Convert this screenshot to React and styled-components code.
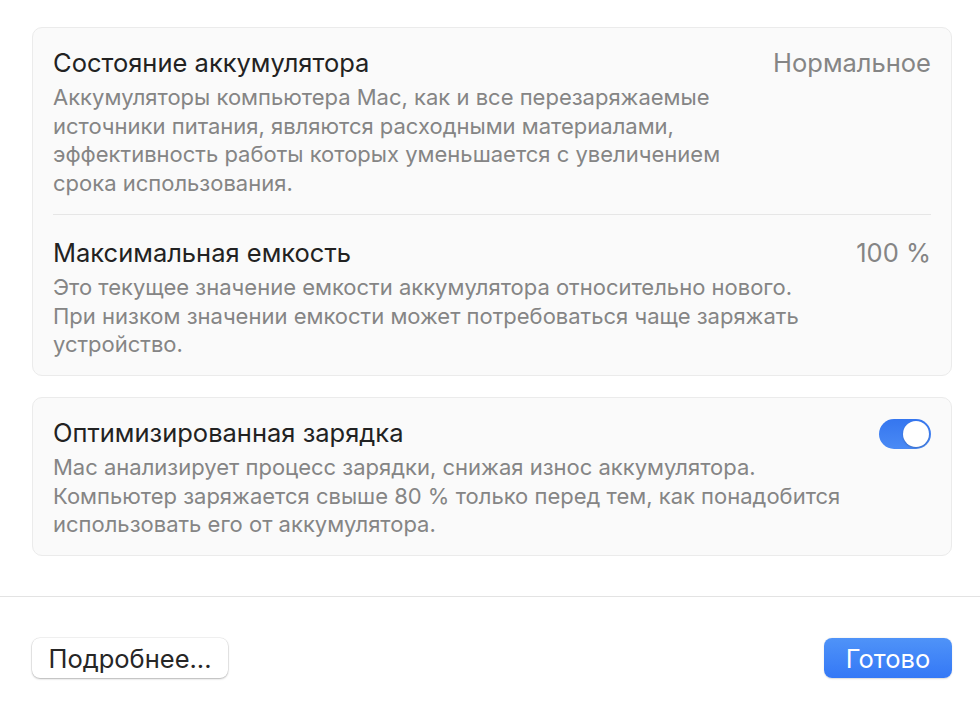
import React from "react";
import styled, { createGlobalStyle } from "styled-components";

const Global = createGlobalStyle`
  html, body { margin: 0; padding: 0; background: #ffffff; }
  body { font-family: Inter, "Noto Sans", "Liberation Sans", sans-serif; -webkit-font-smoothing: antialiased; }
  * { box-sizing: border-box; }
`;

const Page = styled.div`
  width: 980px;
  height: 708px;
  display: flex;
  flex-direction: column;
  background: #ffffff;
  overflow: hidden;
`;

const Content = styled.div`
  display: flex;
  flex-direction: column;
  gap: 21px;
  padding: 27px 28px 0 32px;
`;

const Card = styled.div`
  background: #fafafa;
  border: 1px solid #ebebeb;
  border-radius: 10px;
  padding: 0 20px;
`;

const Row = styled.div`
  display: flex;
  align-items: flex-start;
  justify-content: space-between;
  gap: 20px;
  padding: 21px 0 16px;
  & + & {
    border-top: 1px solid #e6e6e6;
    padding-top: 24px;
  }
`;

const Texts = styled.div`
  display: flex;
  flex-direction: column;
  gap: 6px;
`;

const Title = styled.div`
  font-size: 25.5px;
  line-height: 28px;
  color: #222222;
  white-space: nowrap;
`;

const Desc = styled.div`
  font-size: 22px;
  line-height: 28.7px;
  color: #858585;
  white-space: nowrap;
`;

const Value = styled.div`
  font-size: 25.5px;
  line-height: 28px;
  color: #858585;
  white-space: nowrap;
`;

const Toggle = styled.div`
  width: 52px;
  height: 30px;
  border-radius: 15px;
  background: linear-gradient(180deg, #3576ef 0%, #4a8af5 100%);
  display: flex;
  align-items: center;
  justify-content: ${(p) => (p.$on ? "flex-end" : "flex-start")};
  padding: 0 2px;
  flex-shrink: 0;
`;

const Knob = styled.div`
  width: 26px;
  height: 26px;
  border-radius: 50%;
  background: #ffffff;
  box-shadow: 0 1px 2px rgba(0, 0, 0, 0.2);
`;

const Divider = styled.div`
  height: 1px;
  background: #e3e3e3;
  margin-top: 40px;
`;

const Footer = styled.div`
  display: flex;
  justify-content: space-between;
  align-items: center;
  padding: 41px 28px 0 32px;
`;

const Button = styled.button`
  height: 40px;
  border-radius: 8px;
  font-family: inherit;
  font-size: 25.5px;
  padding: 0 16px;
  min-width: ${(p) => p.$w}px;
  cursor: pointer;
  border: none;
  color: ${(p) => (p.$primary ? "#ffffff" : "#262626")};
  background: ${(p) =>
    p.$primary ? "linear-gradient(180deg, #4f93f8 0%, #3478f6 100%)" : "#ffffff"};
  box-shadow: ${(p) =>
    p.$primary
      ? "0 0.5px 1.5px rgba(0,0,0,0.15)"
      : "0 1px 2px rgba(0,0,0,0.25), 0 0 0 0.5px rgba(0,0,0,0.1)"};
`;

export default function App() {
  return (
    <Page>
      <Global />
      <Content>
        <Card>
          <Row>
            <Texts>
              <Title>Состояние аккумулятора</Title>
              <Desc>
                Аккумуляторы компьютера Mac, как и все перезаряжаемые
                <br />
                источники питания, являются расходными материалами,
                <br />
                эффективность работы которых уменьшается с увеличением
                <br />
                срока использования.
              </Desc>
            </Texts>
            <Value>Нормальное</Value>
          </Row>
          <Row>
            <Texts>
              <Title>Максимальная емкость</Title>
              <Desc>
                Это текущее значение емкости аккумулятора относительно нового.
                <br />
                При низком значении емкости может потребоваться чаще заряжать
                <br />
                устройство.
              </Desc>
            </Texts>
            <Value>100 %</Value>
          </Row>
        </Card>
        <Card>
          <Row>
            <Texts>
              <Title>Оптимизированная зарядка</Title>
              <Desc>
                Mac анализирует процесс зарядки, снижая износ аккумулятора.
                <br />
                Компьютер заряжается свыше 80 % только перед тем, как понадобится
                <br />
                использовать его от аккумулятора.
              </Desc>
            </Texts>
            <Toggle $on>
              <Knob />
            </Toggle>
          </Row>
        </Card>
      </Content>
      <Divider />
      <Footer>
        <Button $w={196}>Подробнее...</Button>
        <Button $primary $w={128}>Готово</Button>
      </Footer>
    </Page>
  );
}
